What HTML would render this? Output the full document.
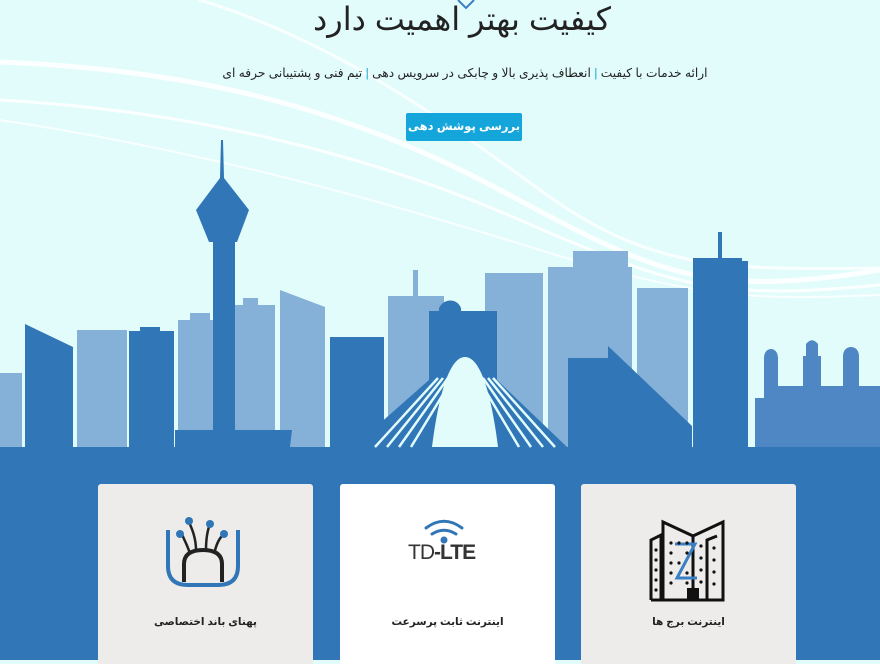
<!DOCTYPE html>
<html><head><meta charset="utf-8"><style>
html,body{margin:0;padding:0;width:880px;height:660px;overflow:hidden;background:#e2fcfc;font-family:"Liberation Sans","DejaVu Sans",sans-serif;}
.abs{position:absolute}
h1{position:absolute;top:0;left:22px;width:880px;text-align:center;margin:0;font-size:32px;font-weight:normal;color:#222;direction:rtl;white-space:nowrap}
.sub{position:absolute;top:66px;left:0;width:930px;text-align:center;font-size:12.2px;color:#222;direction:rtl;white-space:nowrap}
.sub b{color:#1fa6d8;font-weight:normal}
.btn{position:absolute;left:406px;top:113px;width:116px;height:28px;background:#14a6db;border-radius:2px;color:#fff;font-size:11.5px;font-weight:bold;text-align:center;line-height:28px;direction:rtl;white-space:nowrap}
.card{position:absolute;top:484px;width:215px;height:180px;background:#edecea;border-radius:3px 3px 0 0;}
.card p{position:absolute;top:132px;width:100%;text-align:center;margin:0;font-size:10.5px;font-weight:bold;color:#222;direction:rtl;white-space:nowrap}
</style></head><body>
<svg class="abs" style="left:0;top:0" width="880" height="660">
<g fill="none" stroke="#fff" stroke-linecap="round">
<path d="M0 62 C200 70 350 110 500 190 S 700 300 880 270" stroke-width="5" opacity=".9"/>
<path d="M0 100 C180 110 360 150 520 220 S 720 300 880 285" stroke-width="3" opacity=".85"/>
<path d="M0 120 C200 150 380 200 540 250 S 760 300 880 295" stroke-width="2" opacity=".8"/>
<path d="M200 0 C330 40 430 110 540 190 S 720 270 880 268" stroke-width="3" opacity=".8"/>
</g>
<path d="M458 0 L466 8 L474 0" fill="none" stroke="#3a7fc4" stroke-width="2"/>
<g fill="#85b0d8">
<rect x="0" y="373" width="22" height="80"/>
<rect x="77" y="330" width="50" height="120"/>
<path d="M178 447V320h12v-7h20v7h5V447z"/>
<path d="M233 447V305h10v-7h15v7h17V447z"/>
<path d="M280 447V290l45 17V447z"/>
<path d="M388 447V296h25v-26h5v26h26V447z"/>
<rect x="485" y="273" width="58" height="175"/>
<path d="M548 447V267h25v-16h55v16h4V447z"/>
<rect x="637" y="288" width="51" height="160"/>
</g>
<g fill="#3176b6">
<path d="M25 447V324l48 23V447z"/>
<path d="M129 447V331h11v-4h20v4h14V447z"/>
<path d="M221 140L223 140 224 178 249 210 237 242 235 242 235 430 292 430 290 447 175 447 175 430 213 430 213 242 209 242 196 210 220 178z"/>
<rect x="330" y="337" width="54" height="112"/>
<path d="M429 380V311h10v-3c5-10 18-10 22 0v3h36V380l70 67H353z"/>
<path d="M568 447V358h40V346l84 80V447z"/>
<path d="M693 447V258h25v-26h4v26h20v3h6V447z"/>
<rect x="0" y="447" width="880" height="213"/>
</g>
<path d="M432 447c5-40 15-90 33-90c18 0 28 50 33 90z" fill="#e2fcfc"/>
<g stroke="#e2fcfc" stroke-width="2.5">
<path d="M438 378L375 447M443 378L387 447M448 378L399 447M453 378L411 447"/>
<path d="M478 378L519 447M483 378L531 447M488 378L543 447M493 378L555 447"/>
</g>
<path d="M755 447V398h9v-40c0-12 14-12 14 0v28h25v-30h3v-12c4-5 8-5 12 0v12h3v30h22v-30c0-12 16-12 16 0v30h21V447z" fill="#4e87c4"/>
</svg>
<h1>کیفیت بهتر اهمیت دارد</h1>
<div class="sub">ارائه خدمات با کیفیت <b>|</b> انعطاف پذیری بالا و چابکی در سرویس دهی <b>|</b> تیم فنی و پشتیبانی حرفه ای</div>
<div class="btn">بررسی پوشش دهی</div>
<div class="card" style="left:98px">
<svg class="abs" style="left:64px;top:30px" width="90" height="80">
<path d="M6 16V52c0 13 7 19 20 19h30c13 0 20-6 20-19V16" fill="none" stroke="#3176b6" stroke-width="4"/>
<path d="M22 68V50c0-9 6-14 19-14s19 5 19 14v18" fill="none" stroke="#222" stroke-width="4"/>
<g fill="none" stroke="#222" stroke-width="2.5"><path d="M28 40C26 32 22 26 20 20"/><path d="M34 36C34 24 30 15 27 8"/><path d="M44 36C44 24 46 15 48 10"/><path d="M52 40C54 32 56 26 60 22"/></g>
<g fill="#3176b6"><circle cx="18" cy="20" r="4"/><circle cx="27" cy="7" r="4"/><circle cx="48" cy="10" r="4"/><circle cx="62" cy="20" r="4"/></g>
</svg>
<p>پهنای باند اختصاصی</p></div>
<div class="card" style="left:340px;background:#fff">
<svg class="abs" style="left:66px;top:34px" width="90" height="45">
<g fill="none" stroke="#3176b6" stroke-width="3" stroke-linecap="round"><path d="M20 10c12-9 24-9 36 0"/><path d="M26 16c8-5 16-5 24 0"/></g>
<circle cx="38" cy="22" r="3.5" fill="#3176b6"/>
<text x="2" y="41" font-family="Liberation Sans" font-size="21" fill="#333" letter-spacing="-1">TD<tspan font-weight="bold">-LTE</tspan></text>
</svg>
<p>اینترنت ثابت پرسرعت</p></div>
<div class="card" style="left:581px">
<svg class="abs" style="left:68px;top:34px" width="80" height="85">
<g fill="none" stroke="#111" stroke-width="3"><path d="M2 82V22l10-5v65"/><path d="M14 82V4l30 14V82"/><path d="M44 18L74 4V82H2"/><path d="M58 82V22l10-4"/></g>
<rect x="38" y="70" width="12" height="12" fill="#111"/>
<path d="M26 26h20L28 60h20" fill="none" stroke="#3a7fc4" stroke-width="3"/>
<g fill="#111"><circle cx="7" cy="32" r="1.6"/><circle cx="7" cy="42" r="1.6"/><circle cx="7" cy="52" r="1.6"/><circle cx="7" cy="62" r="1.6"/><circle cx="7" cy="72" r="1.6"/>
<circle cx="22" cy="25" r="1.6"/><circle cx="30" cy="25" r="1.6"/><circle cx="38" cy="25" r="1.6"/><circle cx="22" cy="35" r="1.6"/><circle cx="38" cy="35" r="1.6"/><circle cx="22" cy="45" r="1.6"/><circle cx="30" cy="45" r="1.6"/><circle cx="22" cy="55" r="1.6"/><circle cx="38" cy="55" r="1.6"/><circle cx="22" cy="65" r="1.6"/><circle cx="38" cy="65" r="1.6"/>
<circle cx="52" cy="28" r="1.6"/><circle cx="52" cy="40" r="1.6"/><circle cx="52" cy="52" r="1.6"/><circle cx="52" cy="64" r="1.6"/><circle cx="65" cy="30" r="1.6"/><circle cx="65" cy="42" r="1.6"/><circle cx="65" cy="54" r="1.6"/><circle cx="65" cy="66" r="1.6"/></g>
</svg>
<p>اینترنت برج ها</p></div>
</body></html>
